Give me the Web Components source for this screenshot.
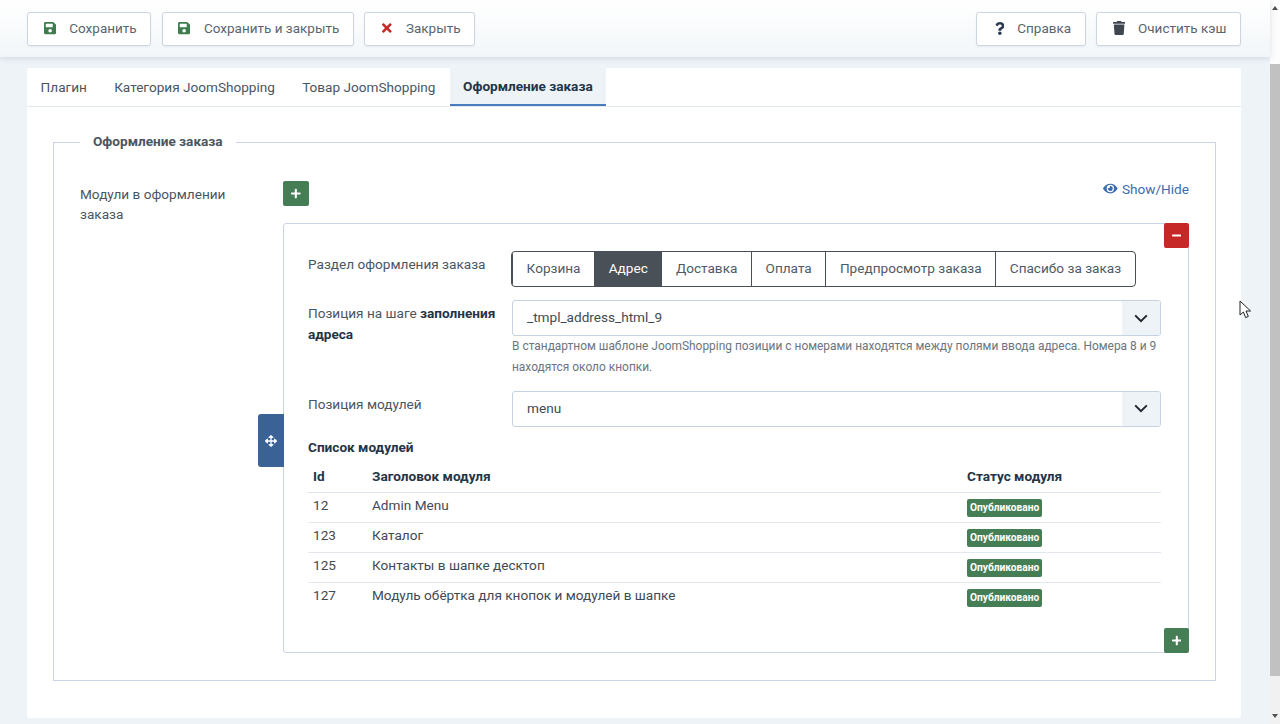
<!DOCTYPE html>
<html lang="ru"><head><meta charset="utf-8"><title>Оформление заказа</title>
<style>
html,body{margin:0;height:724px;overflow:hidden;background:#eef3f8;font-family:Roboto,"Noto Sans",sans-serif;font-size:13.6px;color:#3b4a5a}
b{color:#243447}
</style></head><body>
<x-app>
  <x-toolbar>
    <x-btn slot="left" icon="save" tone="#3f7d4f">Сохранить</x-btn>
    <x-btn slot="left" icon="save" tone="#3f7d4f">Сохранить и закрыть</x-btn>
    <x-btn slot="left" icon="times" tone="#c52827">Закрыть</x-btn>
    <x-btn slot="right" icon="question" tone="#2b3a52">Справка</x-btn>
    <x-btn slot="right" icon="trash" tone="#3f4650">Очистить кэш</x-btn>
  </x-toolbar>
  <x-card>
    <x-tabs items="Плагин|Категория JoomShopping|Товар JoomShopping|Оформление заказа" active="3"></x-tabs>
    <x-fieldset legend="Оформление заказа">
      <x-subform label="Модули в оформлении заказа">
        <x-form-row label="Раздел оформления заказа">
          <x-seg items="Корзина|Адрес|Доставка|Оплата|Предпросмотр заказа|Спасибо за заказ" active="1"></x-seg>
        </x-form-row>
        <x-form-row>
          <span slot="label">Позиция на шаге <b>заполнения</b> <b>адреса</b></span>
          <x-select value="_tmpl_address_html_9"></x-select>
          <x-help>В стандартном шаблоне JoomShopping позиции с номерами находятся между полями ввода адреса. Номера 8 и 9 находятся около кнопки.</x-help>
        </x-form-row>
        <x-form-row label="Позиция модулей">
          <x-select value="menu"></x-select>
        </x-form-row>
        <x-module-table></x-module-table>
      </x-subform>
    </x-fieldset>
  </x-card>
  <x-scrollbar slot="scroll"></x-scrollbar>
  <x-cursor slot="overlay"></x-cursor>
</x-app>
<script>
const ICONS={
save:['0 0 448 512','M433.941 129.941l-83.882-83.882A48 48 0 0 0 316.118 32H48C21.49 32 0 53.49 0 80v352c0 26.51 21.49 48 48 48h352c26.51 0 48-21.49 48-48V163.882a48 48 0 0 0-14.059-33.941zM224 416c-35.346 0-64-28.654-64-64 0-35.346 28.654-64 64-64s64 28.654 64 64c0 35.346-28.654 64-64 64zm96-304.52V212c0 6.627-5.373 12-12 12H76c-6.627 0-12-5.373-12-12V108c0-6.627 5.373-12 12-12h228.52c3.183 0 6.235 1.264 8.485 3.515l3.48 3.48A11.996 11.996 0 0 1 320 111.48z'],
times:['0 0 352 512','M242.72 256l100.07-100.07c12.28-12.28 12.28-32.19 0-44.48l-22.24-22.24c-12.28-12.28-32.19-12.28-44.48 0L176 189.28 75.93 89.21c-12.28-12.28-32.19-12.28-44.48 0L9.21 111.45c-12.28 12.28-12.28 32.19 0 44.48L109.28 256 9.21 356.07c-12.28 12.28-12.28 32.19 0 44.48l22.24 22.24c12.28 12.28 32.2 12.28 44.48 0L176 322.72l100.07 100.07c12.28 12.28 32.2 12.28 44.48 0l22.24-22.24c12.28-12.28 12.28-32.19 0-44.48L242.72 256z'],
question:['0 0 384 512','M202.021 0C122.202 0 70.503 32.703 29.914 91.026c-7.363 10.58-5.093 25.086 5.178 32.874l43.138 32.709c10.373 7.865 25.132 6.026 33.253-4.148 25.049-31.381 43.63-49.449 82.757-49.449 30.764 0 68.816 19.799 68.816 49.631 0 22.552-18.617 34.134-48.993 51.164-35.423 19.86-82.299 44.576-82.299 106.405V320c0 13.255 10.745 24 24 24h72.471c13.255 0 24-10.745 24-24v-5.773c0-42.86 125.268-44.645 125.268-160.627C377.504 66.256 286.902 0 202.021 0zM192 373.459c-38.196 0-69.271 31.075-69.271 69.271 0 38.195 31.075 69.27 69.271 69.27s69.271-31.075 69.271-69.271-31.075-69.27-69.271-69.27z'],
trash:['0 0 448 512','M432 32H312l-9.4-18.7A24 24 0 0 0 281.1 0H166.8a23.72 23.72 0 0 0-21.4 13.3L136 32H16A16 16 0 0 0 0 48v32a16 16 0 0 0 16 16h416a16 16 0 0 0 16-16V48a16 16 0 0 0-16-16zM53.2 467a48 48 0 0 0 47.9 45h245.8a48 48 0 0 0 47.9-45L416 128H32z'],
eye:['0 0 576 512','M572.52 241.4C518.29 135.59 410.93 64 288 64S57.68 135.64 3.48 241.41a32.35 32.35 0 0 0 0 29.19C57.71 376.41 165.07 448 288 448s230.32-71.64 284.52-177.41a32.35 32.35 0 0 0 0-29.19zM288 400a144 144 0 1 1 144-144 143.93 143.93 0 0 1-144 144zm0-240a95.31 95.31 0 0 0-25.31 3.79 47.85 47.85 0 0 1-66.9 66.9A95.78 95.78 0 1 0 288 160z'],
move:['0 0 512 512','M352.201 425.775l-79.196 79.196c-9.373 9.373-24.568 9.373-33.941 0l-79.196-79.196c-15.119-15.119-4.411-40.971 16.971-40.97h51.162L228 284H127.196v51.162c0 21.382-25.851 32.09-40.971 16.971L7.029 272.937c-9.373-9.373-9.373-24.569 0-33.941L86.225 159.8c15.119-15.119 40.971-4.411 40.971 16.971V228H228V127.196h-51.23c-21.382 0-32.09-25.851-16.971-40.971l79.196-79.196c9.373-9.373 24.568-9.373 33.941 0l79.196 79.196c15.119 15.119 4.411 40.971-16.971 40.971h-51.162V228h100.804v-51.162c0-21.382 25.851-32.09 40.97-16.971l79.196 79.196c9.373 9.373 9.373 24.569 0 33.941L425.773 352.2c-15.119 15.119-40.971 4.411-40.97-16.971V284H284v100.804h51.23c21.382 0 32.09 25.851 16.971 40.971z'],
plus:['0 0 448 512','M416 208H272V64c0-17.67-14.33-32-32-32h-32c-17.67 0-32 14.33-32 32v144H32c-17.67 0-32 14.33-32 32v32c0 17.67 14.33 32 32 32h144v144c0 17.67 14.33 32 32 32h32c17.67 0 32-14.33 32-32V304h144c17.67 0 32-14.33 32-32v-32c0-17.67-14.33-32-32-32z'],
minus:['0 0 448 512','M416 208H32c-17.67 0-32 14.33-32 32v32c0 17.67 14.33 32 32 32h384c17.67 0 32-14.33 32-32v-32c0-17.67-14.33-32-32-32z']
};
const svg=(n,h,c)=>{const[v,d]=ICONS[n];const p=v.split(' ');const w=h*p[2]/p[3];return `<svg xmlns="http://www.w3.org/2000/svg" viewBox="${v}" width="${w}" height="${h}" fill="${c}" style="display:block;flex:none"><path d="${d}"/></svg>`};
class Base extends HTMLElement{
  constructor(){super();this.attachShadow({mode:'open'})}
  connectedCallback(){this.shadowRoot.innerHTML=this.view()}
}
const def=(n,f)=>customElements.define(n,class extends Base{view(){return f.call(this)}});

def('x-app',()=>`<style>
:host{display:grid;grid-template-columns:1fr 10px;height:724px;position:relative;overflow:hidden}
.main{display:flex;flex-direction:column;min-width:0}
</style><div class="main"><slot></slot></div><slot name="scroll"></slot><slot name="overlay"></slot>`);

def('x-toolbar',()=>`<style>
:host{display:flex;justify-content:space-between;align-items:flex-start;box-sizing:border-box;height:57px;padding:12px 29px 0 27px;background:linear-gradient(#fff,#f2f6f9);box-shadow:0 1px 6px rgba(90,110,135,.22);position:relative}
div{display:flex;gap:10.5px}
.r{gap:10px}
</style><div><slot name="left"></slot></div><div class="r"><slot name="right"></slot></div>`);

def('x-btn',function(){const ic=this.getAttribute('icon');const c={save:[15.5,13.5,14],times:[17,14,14],question:[18,13,13],trash:[16,13,14]}[ic];return `<style>
:host{display:flex;align-items:center;box-sizing:border-box;height:34px;padding:0 13.6px 2px ${c[0]}px;gap:${c[1]}px;background:#fff;border:1px solid #ccd5e0;border-radius:3px;font-size:13.5px;color:#5b6570;white-space:nowrap;box-shadow:0 1px 2px rgba(60,80,110,.07)}
</style>${svg(ic,c[2],this.getAttribute('tone'))}<slot></slot>`});

def('x-card',()=>`<style>
:host{display:block;box-sizing:border-box;margin:11px 29px 0 27px;height:650px;background:#fff;border-radius:2px}
</style><slot></slot>`);

def('x-tabs',function(){const a=+this.getAttribute('active');return `<style>
:host{display:flex;box-sizing:border-box;height:39px;border-bottom:1px solid #e3e9f0}
span{display:flex;align-items:center;box-sizing:border-box;height:38px;padding:0 13.6px;color:#4a5562;font-size:13.6px}
.on{background:#eef3f8;border-bottom:2px solid #4a7dbd;color:#243447;font-weight:700;padding:0 13.5px;margin-left:.5px}
</style>${this.getAttribute('items').split('|').map((t,i)=>`<span class="${i==a?'on':''}">${t}</span>`).join('')}`});

def('x-fieldset',function(){return `<style>
:host{display:block;padding:25px 25px 0 26px}
fieldset{margin:0;padding:0 26px 26px;border:1px solid #c9d5e6;min-width:0;height:549px;box-sizing:border-box}
legend{margin-left:0;padding:0 13px 2px;font-weight:700;font-size:13.6px;line-height:18px;color:#4a5562}
</style><fieldset><legend>${this.getAttribute('legend')}</legend><slot></slot></fieldset>`});

def('x-subform',function(){return `<style>
:host{display:grid;grid-template-columns:203px 906px;padding-top:29px}
.l{font-size:13.6px;line-height:20px;color:#4a5562;padding-top:3px;padding-right:30px}
.top{display:flex;justify-content:space-between;align-items:center;height:25px;margin-bottom:17px}
.show{display:flex;align-items:center;gap:4px;color:#3a6cb0;font-size:13.6px;position:relative;top:-5px}
.sq{display:flex;align-items:center;justify-content:center;width:26px;height:25px;border-radius:2px;background:#457d54}
.box{position:relative;box-sizing:border-box;height:430px;border:1px solid #c9d5e6;border-radius:3px;padding:27px 27px 0 24px}
.box>.sq{position:absolute;right:-1px;width:25px}
.add{bottom:-1px}
.box>.min{top:-1px;background:#c52827}
.drag{position:absolute;left:-26px;top:190px;width:26px;height:53px;background:#3a6296;border-radius:3px 0 0 3px;display:flex;align-items:center;justify-content:center}
</style><div class="l">${this.getAttribute('label')}</div><div>
<div class="top"><div class="sq">${svg('plus',11,'#fff')}</div><div class="show">${svg('eye',13,'#3a6cb0')}<span>Show/Hide</span></div></div>
<div class="box"><div class="sq min">${svg('minus',11,'#fff')}</div><div class="drag">${svg('move',12,'#fff')}</div><slot></slot><div class="sq add">${svg('plus',11,'#fff')}</div></div></div>`});

def('x-form-row',function(){const l=this.getAttribute('label');return `<style>
:host{display:grid;grid-template-columns:204px 649px;margin-bottom:13px}
.l{font-size:13.6px;line-height:21px;padding:3px 10px 0 0;color:#4a5562}
</style><div class="l"><slot name="label">${l||''}</slot></div><div><slot></slot></div>`});

def('x-seg',function(){const a=+this.getAttribute('active');return `<style>
:host{display:inline-flex;height:36px;box-sizing:border-box;border:1px solid #495057;border-radius:4px;overflow:hidden;vertical-align:top;margin-left:-1px}
span{display:flex;align-items:center;padding:0 13.6px 2px;font-size:13.6px;color:#4f5a66;border-left:1px solid #495057;white-space:nowrap}
span:first-child{border-left:0;padding-left:13px;padding-right:13px}
.on{background:#495057;color:#fff}
</style>${this.getAttribute('items').split('|').map((t,i)=>`<span class="${i==a?'on':''}">${t}</span>`).join('')}`});

def('x-select',function(){return `<style>
:host{display:flex;justify-content:space-between;box-sizing:border-box;height:36px;border:1px solid #c6d2e2;border-radius:3px;overflow:hidden}
.v{padding-left:14px;line-height:33px;font-size:13.6px;color:#3f4a56}
.c{width:38px;background:#eef3f8;display:flex;align-items:center;justify-content:center}
</style><div class="v">${this.getAttribute('value')}</div><div class="c"><svg width="14" height="9" viewBox="0 0 14 9"><path d="M1.2 1.4l5.8 5.8 5.8-5.8" fill="none" stroke="#1f2730" stroke-width="2"/></svg></div>`});

def('x-help',()=>`<style>
:host{display:block;font-size:11.93px;line-height:21px;color:#6b7580;margin-top:-.5px}
</style><slot></slot>`);

def('x-module-table',()=>{const rows=[['12','Admin Menu'],['123','Каталог'],['125','Контакты в шапке десктоп'],['127','Модуль обёртка для кнопок и модулей в шапке']];
return `<style>
:host{display:block;width:853px;margin-top:-3px}
h4{margin:0;font-size:13.6px;line-height:20px;font-weight:700;color:#243447}
table{border-collapse:collapse;width:100%;table-layout:fixed;margin-top:9px;font-size:13.6px;color:#3f4a56}
th{font-weight:700;text-align:left;color:#243447;padding:0 5px 6px;line-height:20px;border-bottom:1px solid #dfe5ec}
td{padding:2px 5px 5px;line-height:20px;vertical-align:top;border-bottom:1px solid #e3e8ee}
tr:last-child td{border-bottom:0}
.b{display:inline-block;vertical-align:top;margin-top:4px;box-sizing:border-box;height:18px;padding:0 3px;border-radius:2px;background:#457d54;color:#fff;font-size:10.2px;font-weight:700;line-height:17px}
</style><h4>Список модулей</h4><table><colgroup><col style="width:59px"><col style="width:595px"><col></colgroup>
<tr><th>Id</th><th>Заголовок модуля</th><th>Статус модуля</th></tr>
${rows.map(r=>`<tr><td>${r[0]}</td><td>${r[1]}</td><td><span class="b">Опубликовано</span></td></tr>`).join('')}</table>`});

def('x-scrollbar',()=>`<style>
:host{display:flex;flex-direction:column;height:724px;background:#f1f1f1;align-items:stretch}
.a{height:64px;display:flex;justify-content:center;padding-top:6px;box-sizing:border-box;background:#fdfdfd}
.t{height:612px;background:#c1c1c1}
.f{flex:1;display:flex;justify-content:center;align-items:flex-end;padding-bottom:6px;background:#f1f1f1}
</style><div class="a"><svg width="6" height="4"><path d="M3 0l3 4H0z" fill="#505050"/></svg></div><div class="t"></div><div class="f"><svg width="6" height="4"><path d="M0 0h6L3 4z" fill="#505050"/></svg></div>`);

def('x-cursor',()=>`<style>
:host{position:absolute;left:1239px;top:300px;width:14px;height:20px}
</style><svg width="14" height="20" viewBox="0 0 14 20"><path d="M1 1v14l3.4-3 2.3 5.6 2.6-1.1L7 11h4.6z" fill="#fff" stroke="#222" stroke-width="1" stroke-linejoin="round"/></svg>`);
</script>
</body></html>
